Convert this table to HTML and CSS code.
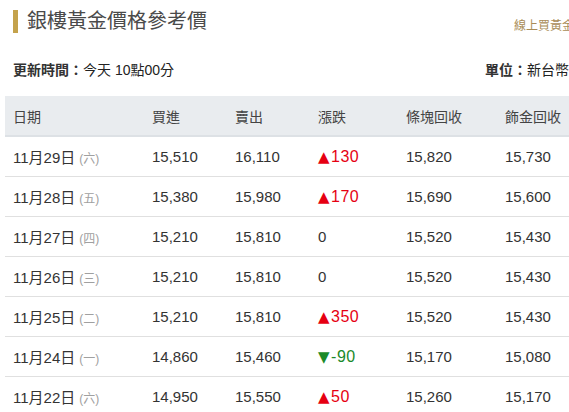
FILE: index.html
```html
<!DOCTYPE html>
<html lang="zh-Hant">
<head>
<meta charset="utf-8">
<title>銀樓黃金價格參考價</title>
<link rel="stylesheet" href="styles.css">
</head>
<body>
<div class="page">
  <div class="title-row">
    <h2 class="title">銀樓黃金價格參考價</h2>
    <a class="buy-link" href="#">線上買黃金</a>
  </div>
  <div class="meta-row">
    <div class="updated"><b>更新時間：</b>今天 10點00分</div>
    <div class="unit"><b>單位：</b>新台幣</div>
  </div>
  <table class="prices">
    <colgroup>
      <col class="c-date"><col class="c-buy"><col class="c-sell"><col class="c-chg"><col class="c-bar"><col class="c-jew">
    </colgroup>
    <thead>
      <tr><th>日期</th><th>買進</th><th>賣出</th><th>漲跌</th><th>條塊回收</th><th>飾金回收</th></tr>
    </thead>
    <tbody>
      <tr><td>11月29日<span class="wd">(六)</span></td><td>15,510</td><td>16,110</td><td class="up"><span class="tri">▲</span>130</td><td>15,820</td><td>15,730</td></tr>
      <tr><td>11月28日<span class="wd">(五)</span></td><td>15,380</td><td>15,980</td><td class="up"><span class="tri">▲</span>170</td><td>15,690</td><td>15,600</td></tr>
      <tr><td>11月27日<span class="wd">(四)</span></td><td>15,210</td><td>15,810</td><td>0</td><td>15,520</td><td>15,430</td></tr>
      <tr><td>11月26日<span class="wd">(三)</span></td><td>15,210</td><td>15,810</td><td>0</td><td>15,520</td><td>15,430</td></tr>
      <tr><td>11月25日<span class="wd">(二)</span></td><td>15,210</td><td>15,810</td><td class="up"><span class="tri">▲</span>350</td><td>15,520</td><td>15,430</td></tr>
      <tr><td>11月24日<span class="wd">(一)</span></td><td>14,860</td><td>15,460</td><td class="down"><span class="tri">▼</span>-90</td><td>15,170</td><td>15,080</td></tr>
      <tr><td>11月22日<span class="wd">(六)</span></td><td>14,950</td><td>15,550</td><td class="up"><span class="tri">▲</span>50</td><td>15,260</td><td>15,170</td></tr>
    </tbody>
  </table>
</div>
</body>
</html>
```
FILE: styles.css
```css
html, body {
  margin: 0;
  overflow: hidden;
  background: #fff;
}
body {
  font-family: "Liberation Sans", "Noto Sans CJK TC", sans-serif;
  color: #333;
}
.page {
  width: 600px;
}
.title-row {
  display: flex;
  align-items: flex-end;
  padding: 10px 26px 0 13px;
}
.title {
  margin: 0;
  border-left: 5px solid #c4a24c;
  padding-left: 9px;
  font-size: 20px;
  line-height: 23px;
  font-weight: normal;
  color: #4a4a4a;
}
.buy-link {
  margin-left: auto;
  font-size: 12px;
  line-height: 14px;
  color: #a98c57;
  text-decoration: none;
}
.meta-row {
  display: flex;
  justify-content: space-between;
  margin-top: 27px;
  padding: 0 31px 0 13px;
  font-size: 14px;
  line-height: 20px;
  color: #222;
}
.meta-row b {
  font-weight: bold;
  color: #333;
}
.prices {
  margin: 16px 0 0 5px;
  border-collapse: collapse;
  table-layout: fixed;
  width: 595px;
}
.c-date { width: 139px; }
.c-buy { width: 83px; }
.c-sell { width: 83px; }
.c-chg { width: 88px; }
.c-bar { width: 99px; }
.c-jew { width: 103px; }
.prices th {
  height: 39px;
  padding: 0 8px;
  background: #e9ecef;
  border-bottom: 2px solid #dde1e5;
  text-align: left;
  font-size: 14px;
  font-weight: normal;
  color: #444;
}
.prices td {
  height: 39px;
  padding: 0 8px;
  border-bottom: 1px solid #e0e0e0;
  font-size: 15px;
  color: #333;
  white-space: nowrap;
}
.wd {
  margin-left: 4px;
  font-size: 12px;
  color: #a0a0a0;
}
.prices td.up {
  color: #e60012;
  font-size: 16px;
  letter-spacing: 0.5px;
}
.prices td.down {
  color: #1b8a2a;
  font-size: 16px;
  letter-spacing: 0.5px;
}
.tri {
  font-family: "DejaVu Sans", sans-serif;
  font-size: 15px;
  margin-right: 1px;
}
```
